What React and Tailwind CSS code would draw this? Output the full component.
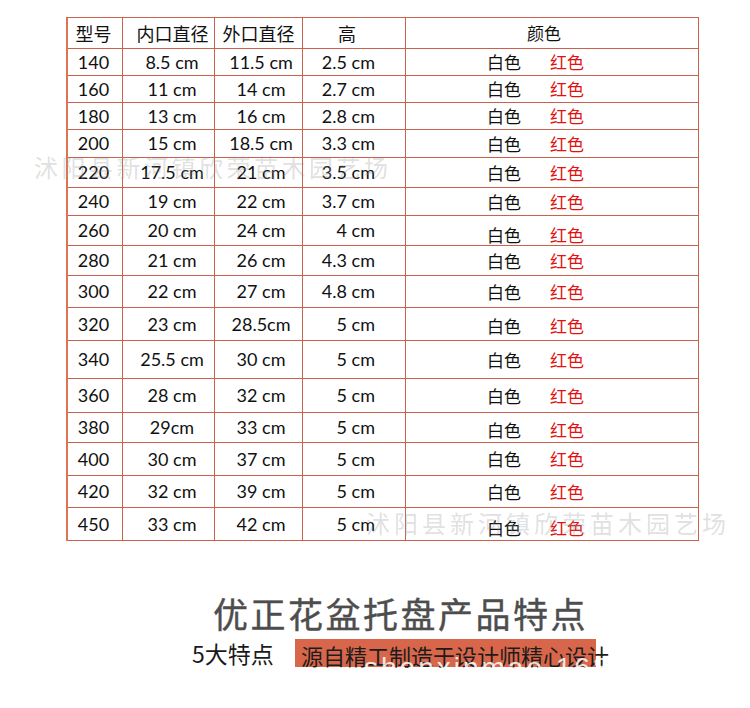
import React from "react";

const rows = [
  { no: "140", inner: "8.5 cm", outer: "11.5 cm", high: "2.5 cm", h: "h-[27px]", dy: "" },
  { no: "160", inner: "11 cm", outer: "14 cm", high: "2.7 cm", h: "h-[27px]", dy: "" },
  { no: "180", inner: "13 cm", outer: "16 cm", high: "2.8 cm", h: "h-[27px]", dy: "" },
  { no: "200", inner: "15 cm", outer: "18.5 cm", high: "3.3 cm", h: "h-[28px]", dy: "" },
  { no: "220", inner: "17.5 cm", outer: "21 cm", high: "3.5 cm", h: "h-[30px]", dy: "" },
  { no: "240", inner: "19 cm", outer: "22 cm", high: "3.7 cm", h: "h-[28px]", dy: "" },
  { no: "260", inner: "20 cm", outer: "24 cm", high: "4 cm", h: "h-[30px]", dy: "translate-y-[4px]" },
  { no: "280", inner: "21 cm", outer: "26 cm", high: "4.3 cm", h: "h-[30px]", dy: "" },
  { no: "300", inner: "22 cm", outer: "27 cm", high: "4.8 cm", h: "h-[32px]", dy: "" },
  { no: "320", inner: "23 cm", outer: "28.5cm", high: "5 cm", h: "h-[33px]", dy: "translate-y-[2px]" },
  { no: "340", inner: "25.5 cm", outer: "30 cm", high: "5 cm", h: "h-[38px]", dy: "" },
  { no: "360", inner: "28 cm", outer: "32 cm", high: "5 cm", h: "h-[34px]", dy: "" },
  { no: "380", inner: "29cm", outer: "33 cm", high: "5 cm", h: "h-[30px]", dy: "translate-y-[2px]" },
  { no: "400", inner: "30 cm", outer: "37 cm", high: "5 cm", h: "h-[33px]", dy: "" },
  { no: "420", inner: "32 cm", outer: "39 cm", high: "5 cm", h: "h-[32px]", dy: "" },
  { no: "450", inner: "33 cm", outer: "42 cm", high: "5 cm", h: "h-[33px]", dy: "translate-y-[4px]" },
];

const line = "border-[#c9614c]";

function Row({ r }) {
  return (
    <div className={`flex border-b ${line} ${r.h} text-[18px] text-[#111]`}>
      <div className={`w-[55px] border-r ${line} flex items-center justify-center pr-[3px]`}>{r.no}</div>
      <div className={`w-[92px] border-r ${line} flex items-center justify-center pl-[7px]`}>{r.inner}</div>
      <div className={`w-[88px] border-r ${line} flex items-center justify-center pl-[5px]`}>{r.outer}</div>
      <div className={`w-[103px] border-r ${line} flex items-center justify-end pr-[30px]`}>{r.high}</div>
      <div className={`w-[292px] flex items-center pl-[81px] text-[17px] font-['Noto_Sans_CJK_SC',sans-serif] ${r.dy}`}>
        <span>白色</span>
        <span className="ml-[29px] text-[#e3120f]">红色</span>
      </div>
    </div>
  );
}

export default function App() {
  return (
    <div className="relative w-[750px] h-[708px] overflow-hidden bg-white font-['Lato','Noto_Sans_CJK_SC',sans-serif]">
      <div className={`mt-[17px] ml-[66px] w-[633px] border-t border-r border-l-2 border-l-[#dd7454] ${line}`}>
        <div className={`flex border-b ${line} h-[31px] text-[18px] text-[#111] font-['Noto_Sans_CJK_SC',sans-serif]`}>
          <div className={`w-[55px] border-r ${line} flex items-center justify-center pr-[3px]`}>型号</div>
          <div className={`w-[92px] border-r ${line} flex items-center justify-center pl-[8px]`}>内口直径</div>
          <div className={`w-[88px] border-r ${line} flex items-center justify-center`}>外口直径</div>
          <div className={`w-[103px] border-r ${line} flex items-center justify-center pr-[14px]`}>高</div>
          <div className="w-[292px] flex items-center justify-center pr-[16px] text-[17px]">颜色</div>
        </div>
        {rows.map((r) => (
          <Row key={r.no} r={r} />
        ))}
      </div>

      <div className="mt-[54px] pl-[213px] h-[35px] leading-none text-[35px] tracking-[2.5px] text-[#4d4d4d] [-webkit-text-stroke:0.4px_#4d4d4d] font-['Noto_Sans_CJK_SC',sans-serif]">
        优正花盆托盘产品特点
      </div>

      <div className="mt-[9px] flex items-center h-[28px] font-['Noto_Sans_CJK_SC',sans-serif]">
        <div className="pl-[192px] w-[295px] text-[23px] leading-none text-[#1a1a1a]">5大特点</div>
        <div className="w-[301px] h-[28px] bg-[#d8664b] flex items-center pl-[6px] pt-[3px] text-[22px] leading-none text-[#1c1c1c] whitespace-nowrap">
          源自精工制造于设计师精心设计
        </div>
      </div>

      <div className="pointer-events-none absolute left-[34px] top-[155px] text-[24px] leading-none tracking-[3.5px] text-[rgba(150,150,150,0.3)] font-['Noto_Sans_CJK_SC',sans-serif] whitespace-nowrap">
        沭阳县新河镇欣荣苗木园艺场
      </div>
      <div className="pointer-events-none absolute left-[366px] top-[511px] text-[24px] leading-none tracking-[4px] text-[rgba(150,150,150,0.3)] font-['Noto_Sans_CJK_SC',sans-serif] whitespace-nowrap">
        沭阳县新河镇欣荣苗木园艺场
      </div>
      <div className="pointer-events-none absolute left-[364px] top-[654px] text-[28px] leading-none tracking-[3px] text-[rgba(255,255,255,0.85)] font-['Liberation_Sans',sans-serif] whitespace-nowrap">
        shenxinmao.1688.com
      </div>
    </div>
  );
}
